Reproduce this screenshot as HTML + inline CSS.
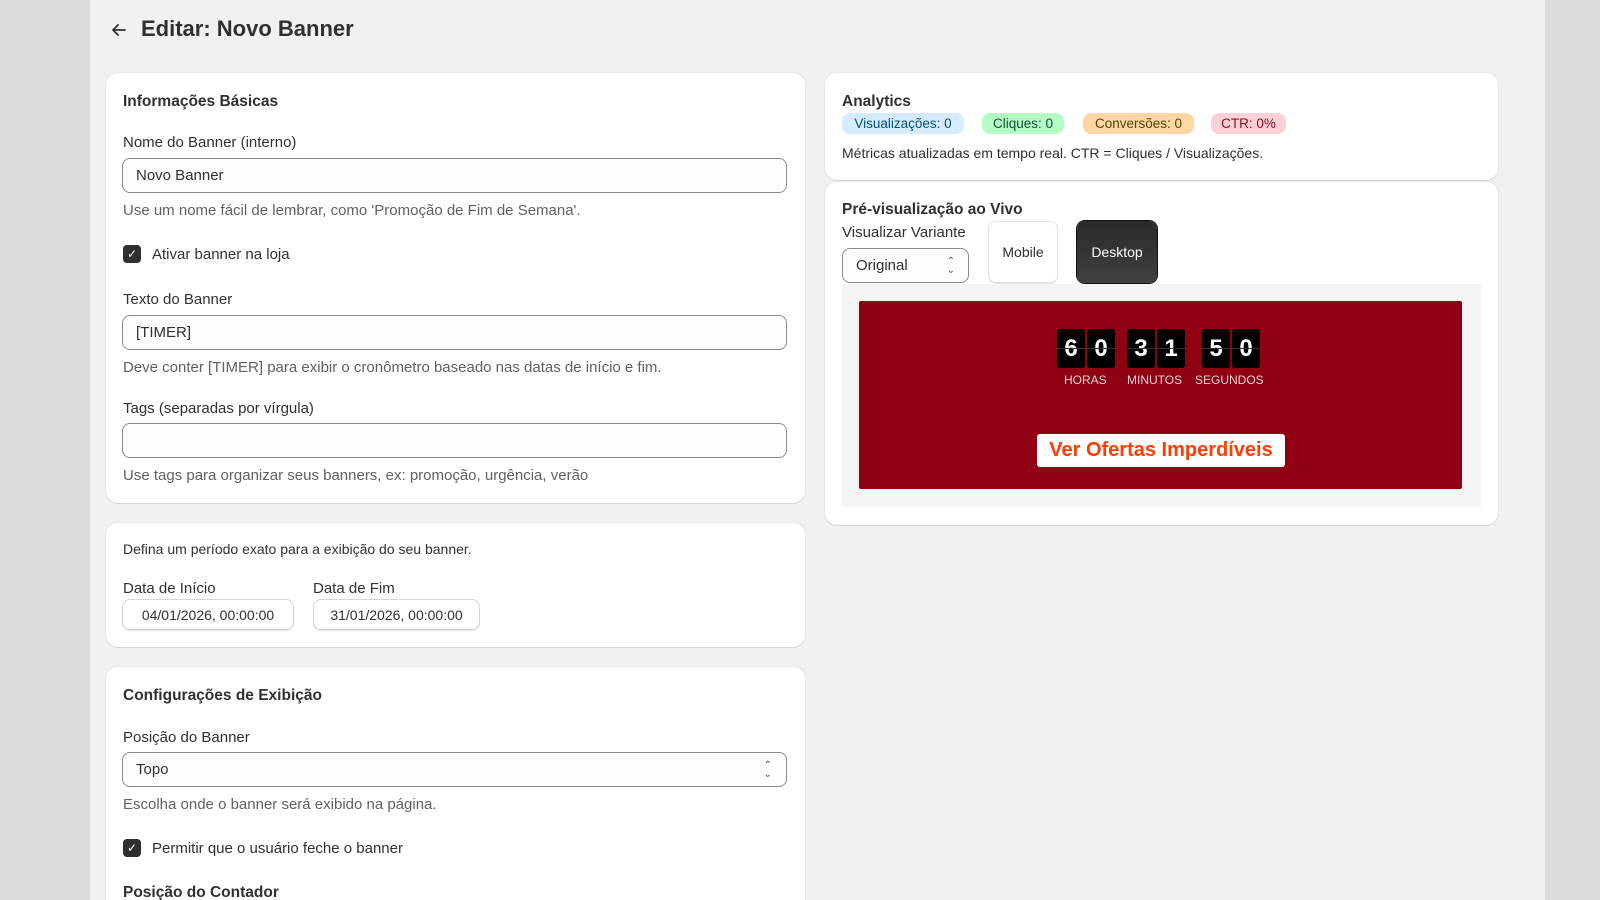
<!DOCTYPE html>
<html style="overflow:hidden"><head><meta charset="utf-8"><style>
*{box-sizing:border-box;margin:0;padding:0}
html,body{width:1600px;height:900px;overflow:hidden}
body{background:#dcdcdc;font-family:"Liberation Sans",sans-serif;color:#303030;position:relative}
.main{position:absolute;left:90px;top:0;width:1455px;height:900px;background:#f1f1f1}
.a{position:absolute;white-space:nowrap}
.card{position:absolute;background:#fff;border-radius:12px;box-shadow:0 1px 0 rgba(0,0,0,.08),0 0 0 1px rgba(0,0,0,.04)}
.h{font-size:15.5px;font-weight:bold;color:#303030}
.l{font-size:15px;color:#303030}
.hp{font-size:15px;color:#616161}
.inp{position:absolute;border:1px solid #8a8a8a;border-radius:8px;background:#fdfdfd;font-size:15px;padding-left:13px;display:flex;align-items:center}
.cb{position:absolute;width:18px;height:18px;border-radius:4px;background:#303030;color:#fff;font-size:12px;display:flex;align-items:center;justify-content:center}
.pill{position:absolute;height:21px;border-radius:8px;font-size:13.5px;display:flex;align-items:center;justify-content:center}
.dg{position:absolute;top:329px;width:28px;height:39px;background:#000;border-radius:3px;color:#fff;font-size:24px;font-weight:bold;display:flex;align-items:center;justify-content:center}
.dg:after{content:"";position:absolute;left:0;right:0;top:19px;height:1px;background:#333}
.tl{position:absolute;top:373px;font-size:12px;color:#f3d0d4}
.date{position:absolute;top:599px;height:31px;border:1px solid #d5d5d5;border-radius:8px;font-size:14px;display:flex;align-items:center;justify-content:center;box-shadow:0 1px 0 rgba(0,0,0,.1)}
</style></head><body>
<div class="main"></div>
<svg class="a" style="left:110px;top:21px" width="18" height="18" viewBox="0 0 18 18"><path d="M15 9H3M8 4L3 9l5 5" fill="none" stroke="#303030" stroke-width="1.8" stroke-linecap="round" stroke-linejoin="round"/></svg>
<div class="a" style="left:141px;top:16px;font-size:22px;font-weight:bold;color:#303030">Editar: Novo Banner</div>

<div class="card" style="left:106px;top:73px;width:699px;height:430px"></div>
<div class="a h" style="left:123px;top:93px">Informações Básicas</div>
<div class="a l" style="left:123px;top:134px">Nome do Banner (interno)</div>
<div class="inp" style="left:122px;top:158px;width:665px;height:35px">Novo Banner</div>
<div class="a hp" style="left:123px;top:202px">Use um nome fácil de lembrar, como 'Promoção de Fim de Semana'.</div>
<div class="cb" style="left:123px;top:245px">✓</div>
<div class="a l" style="left:152px;top:246px">Ativar banner na loja</div>
<div class="a l" style="left:123px;top:291px">Texto do Banner</div>
<div class="inp" style="left:122px;top:315px;width:665px;height:35px">[TIMER]</div>
<div class="a hp" style="left:123px;top:359px">Deve conter [TIMER] para exibir o cronômetro baseado nas datas de início e fim.</div>
<div class="a l" style="left:123px;top:400px">Tags (separadas por vírgula)</div>
<div class="inp" style="left:122px;top:423px;width:665px;height:35px"></div>
<div class="a hp" style="left:123px;top:467px">Use tags para organizar seus banners, ex: promoção, urgência, verão</div>

<div class="card" style="left:106px;top:523px;width:699px;height:124px"></div>
<div class="a" style="left:123px;top:541px;font-size:14px">Defina um período exato para a exibição do seu banner.</div>
<div class="a l" style="left:123px;top:580px">Data de Início</div>
<div class="a l" style="left:313px;top:580px">Data de Fim</div>
<div class="date" style="left:122px;width:172px">04/01/2026, 00:00:00</div>
<div class="date" style="left:313px;width:167px">31/01/2026, 00:00:00</div>

<div class="card" style="left:106px;top:667px;width:699px;height:250px"></div>
<div class="a h" style="left:123px;top:687px">Configurações de Exibição</div>
<div class="a l" style="left:123px;top:729px">Posição do Banner</div>
<div class="inp" style="left:122px;top:752px;width:665px;height:35px">Topo<span style="position:absolute;right:14px;top:8px;font-size:10px;line-height:9px;color:#555">⌃<br>⌄</span></div>
<div class="a hp" style="left:123px;top:796px">Escolha onde o banner será exibido na página.</div>
<div class="cb" style="left:123px;top:839px">✓</div>
<div class="a l" style="left:152px;top:840px">Permitir que o usuário feche o banner</div>
<div class="a h" style="left:123px;top:884px">Posição do Contador</div>

<div class="card" style="left:825px;top:73px;width:673px;height:107px"></div>
<div class="a h" style="left:842px;top:93px">Analytics</div>
<div class="pill" style="left:842px;top:113px;width:122px;background:#d5ebff;color:#00527c">Visualizações: 0</div>
<div class="pill" style="left:982px;top:113px;width:82px;background:#b4fec5;color:#0c5132">Cliques: 0</div>
<div class="pill" style="left:1083px;top:113px;width:111px;background:#ffd6a4;color:#5e4200">Conversões: 0</div>
<div class="pill" style="left:1211px;top:113px;width:75px;background:#fed1d7;color:#8e0b21">CTR: 0%</div>
<div class="a" style="left:842px;top:145px;font-size:14px">Métricas atualizadas em tempo real. CTR = Cliques / Visualizações.</div>

<div class="card" style="left:825px;top:182px;width:673px;height:343px"></div>
<div class="a h" style="left:842px;top:201px">Pré-visualização ao Vivo</div>
<div class="a l" style="left:842px;top:224px">Visualizar Variante</div>
<div class="inp" style="left:842px;top:248px;width:127px;height:35px;border-radius:8px">Original<span style="position:absolute;right:13px;top:8px;font-size:10px;line-height:9px;color:#555">⌃<br>⌄</span></div>
<div class="a" style="left:988px;top:221px;width:70px;height:62px;border:1px solid #e3e3e3;border-radius:8px;display:flex;align-items:center;justify-content:center;font-size:14px;box-shadow:0 1px 0 rgba(0,0,0,.1)">Mobile</div>
<div class="a" style="left:1077px;top:221px;width:80px;height:62px;border-radius:8px;background:linear-gradient(#2a2a2a,#404040);box-shadow:0 0 0 1px #111;color:#fff;display:flex;align-items:center;justify-content:center;font-size:14px">Desktop</div>
<div class="a" style="left:842px;top:284px;width:639px;height:222px;background:#f4f4f4"></div>
<div class="a" style="left:859px;top:301px;width:603px;height:188px;background:#8e0012;border-radius:2px"></div>
<div class="dg" style="left:1057px">6</div><div class="dg" style="left:1087px">0</div>
<div class="dg" style="left:1127px">3</div><div class="dg" style="left:1157px">1</div>
<div class="dg" style="left:1202px">5</div><div class="dg" style="left:1232px">0</div>
<div class="tl" style="left:1064px">HORAS</div>
<div class="tl" style="left:1127px">MINUTOS</div>
<div class="tl" style="left:1195px">SEGUNDOS</div>
<div class="a" style="left:1037px;top:434px;width:248px;height:33px;background:#fff;border-radius:3px;color:#ff3d00;font-size:20px;font-weight:bold;display:flex;align-items:center;justify-content:center">Ver Ofertas Imperdíveis</div>
</body></html>
